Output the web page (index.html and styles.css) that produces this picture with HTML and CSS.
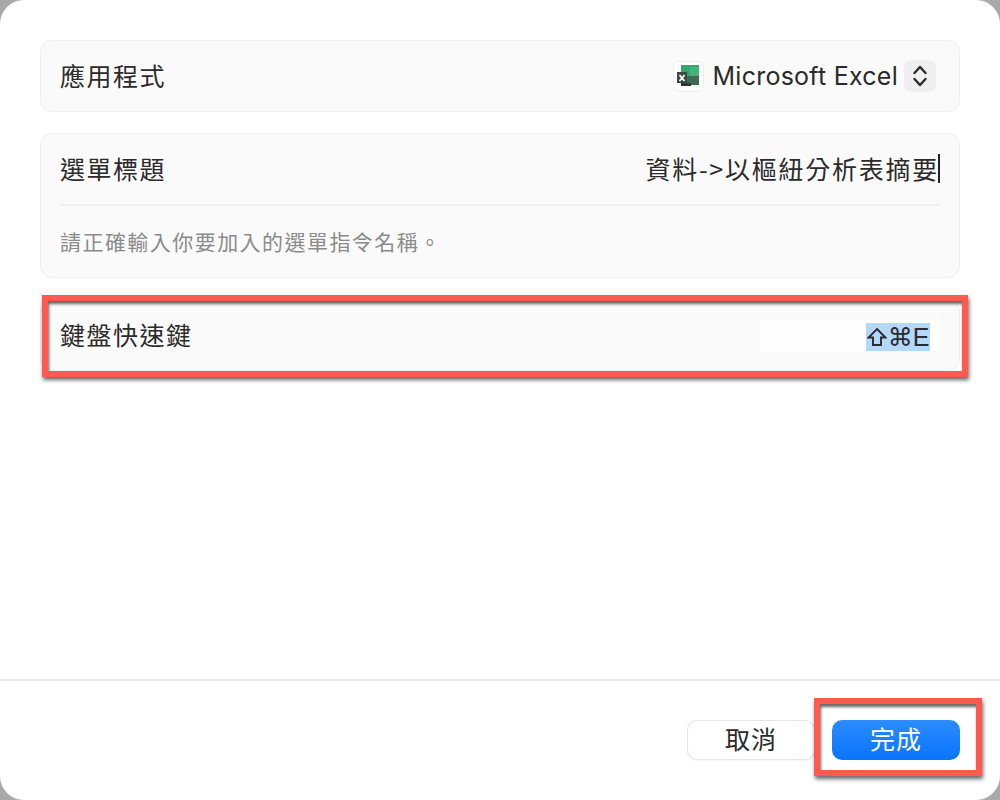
FILE: index.html
```html
<!DOCTYPE html>
<html lang="zh-Hant">
<head>
    <meta charset="UTF-8">
    <title>鍵盤快速鍵</title>
    <link rel="stylesheet" href="styles.css">
</head>
<body>

    <div class="dialog">
        <div class="content">
            <div class="panel row">
                <span class="label">應用程式</span>
                <div class="app-picker">
                    <span class="app-icon">
                        <svg width="31" height="31" viewBox="0 0 31 31">
                            <rect x="0.5" y="0.5" width="30" height="30" rx="6" fill="#fff" stroke="#ececec"/>
                            <rect x="8" y="4" width="18" height="20" fill="#2fa86b"/>
                            <rect x="13" y="15" width="13" height="9" fill="#3d6b58"/>
                            <rect x="17" y="6" width="9" height="9" fill="#45b47c"/>
                            <rect x="4" y="11" width="10" height="11" fill="#3a4a44"/>
                            <rect x="8" y="22" width="10" height="3" fill="#2c3a35"/>
                            <path d="M6.500 14 L11.500 20 M11.500 14 L6.500 20" stroke="#fff" stroke-width="1.800" fill="none"/>
                        </svg>
                    </span>
                    <span class="app-name">Microsoft Excel</span>
                    <span class="stepper">
                        <svg width="16" height="24" viewBox="0 0 16 24">
                            <path d="M2.500 9 L8 3 L13.500 9 M2.500 15 L8 21 L13.500 15" stroke="#2b2b2b" stroke-width="2.400" fill="none" stroke-linecap="round" stroke-linejoin="round"/>
                        </svg>
                    </span>
                </div>
            </div>

            <div class="panel menu-panel">
                <div class="menu-row">
                    <span class="label">選單標題</span>
                    <span class="menu-value">資料-&gt;以樞紐分析表摘要<i class="caret"></i></span>
                </div>
                <p class="hint">請正確輸入你要加入的選單指令名稱。</p>
            </div>

            <div class="panel row shortcut-panel">
                <span class="label">鍵盤快速鍵</span>
                <div class="shortcut-field">
                    <span class="shortcut-keys">
                        <svg class="shift-icon" width="20" height="20" viewBox="0 0 20 20">
                            <path d="M10 2 L18.500 10.500 H14 V18 H6 V10.500 H1.500 Z" fill="none" stroke="#2b2b2b" stroke-width="1.900" stroke-linejoin="miter"/>
                        </svg>
                        <span>⌘E</span>
                    </span>
                </div>
                <div class="mark mark-shortcut"></div>
            </div>
        </div>

        <div class="footer">
            <button class="btn btn-cancel">取消</button>
            <div class="done-wrap">
                <button class="btn btn-done">完成</button>
                <div class="mark mark-done"></div>
            </div>
        </div>
    </div>

</body>
</html>
```
FILE: styles.css
```css
* {
    box-sizing: border-box;
}

body {
    margin: 0;
    width: 1000px;
    height: 800px;
    overflow: hidden;
    background-color: #a9a9a9;
    font-family: "Noto Sans CJK TC", "Noto Sans", sans-serif;
    color: #2b2b2b;
}

.dialog {
    width: 1000px;
    height: 800px;
    background-color: #ffffff;
    border-radius: 24px;
    display: flex;
    flex-direction: column;
}

.content {
    flex: 1;
    padding: 40px 40px 0;
    display: flex;
    flex-direction: column;
    gap: 21px;
}

.panel {
    background-color: #fafafa;
    border: 1px solid #efefef;
    border-radius: 12px;
}

.row {
    height: 72px;
    padding: 0 23px 0 19px;
    display: flex;
    align-items: center;
    justify-content: space-between;
}

.label {
    font-size: 25px;
    letter-spacing: 1.5px;
    line-height: 36px;
    padding-bottom: 2px;
}

/* App picker */
.app-picker {
    display: flex;
    align-items: center;
}

.app-icon {
    width: 31px;
    height: 31px;
    display: flex;
}

.app-name {
    margin-left: 9px;
    font-family: Inter, "Noto Sans", sans-serif;
    font-size: 25px;
    letter-spacing: 0.25px;
}

.stepper {
    margin-left: 6px;
    width: 32px;
    height: 32px;
    background-color: #efefef;
    border-radius: 8px;
    display: flex;
    align-items: center;
    justify-content: center;
}

/* Menu title */
.menu-panel {
    height: 145px;
    padding: 0 19px;
}

.menu-row {
    height: 72px;
    border-bottom: 2px solid #efefef;
    display: flex;
    align-items: center;
    justify-content: space-between;
}

.menu-value {
    font-size: 25px;
    letter-spacing: 1.75px;
    display: flex;
    align-items: center;
    padding-bottom: 2px;
}

.caret {
    width: 2px;
    height: 29px;
    margin-left: -1px;
    background-color: #222;
}

.hint {
    margin: 0;
    padding-top: 20px;
    font-size: 21px;
    letter-spacing: 1.45px;
    line-height: 30px;
    color: #8b8b8b;
}

/* Shortcut */
.shortcut-panel {
    position: relative;
    height: 72px;
    padding-right: 19px;
}

.shortcut-field {
    width: 180px;
    height: 32px;
    background-color: #fefefe;
    display: flex;
    justify-content: flex-end;
    padding-right: 10px;
}

.shortcut-keys {
    width: 64px;
    height: 28px;
    margin-top: 4px;
    background-color: #b3d7ff;
    font-family: "Liberation Sans", "DejaVu Sans", sans-serif;
    font-size: 25px;
    line-height: 28px;
    display: flex;
    align-items: center;
    justify-content: center;
    gap: 1px;
    white-space: nowrap;
}

.shift-icon {
    flex: none;
}

/* Red annotation boxes */
.mark {
    position: absolute;
    border: 6px solid #ff5a4f;
    box-shadow: 1px 3px 4px rgba(0, 0, 0, 0.6), inset 1px 3px 3px rgba(0, 0, 0, 0.6);
    pointer-events: none;
}

.mark-shortcut {
    left: 1px;
    top: -5px;
    width: 926px;
    height: 82px;
}

.mark-done {
    left: -18px;
    top: -22px;
    width: 168px;
    height: 78px;
}

/* Footer */
.footer {
    height: 121px;
    border-top: 2px solid #e8e8e8;
    padding: 39px 40px 0 0;
    display: flex;
    justify-content: flex-end;
    gap: 17px;
}

.done-wrap {
    position: relative;
}

.btn {
    width: 128px;
    height: 40px;
    border-radius: 10px;
    font-family: "Noto Sans CJK TC", "Noto Sans", sans-serif;
    font-size: 25px;
    letter-spacing: 1px;
    line-height: 34px;
    padding: 0 0 4px;
}

.btn-cancel {
    background-color: #ffffff;
    border: 1px solid #e4e4e4;
    color: #2b2b2b;
    box-shadow: 0 1px 1px rgba(0, 0, 0, 0.05);
}

.btn-done {
    display: block;
    background: linear-gradient(#2b8cff, #0a74ff);
    border: none;
    color: #ffffff;
}
```
